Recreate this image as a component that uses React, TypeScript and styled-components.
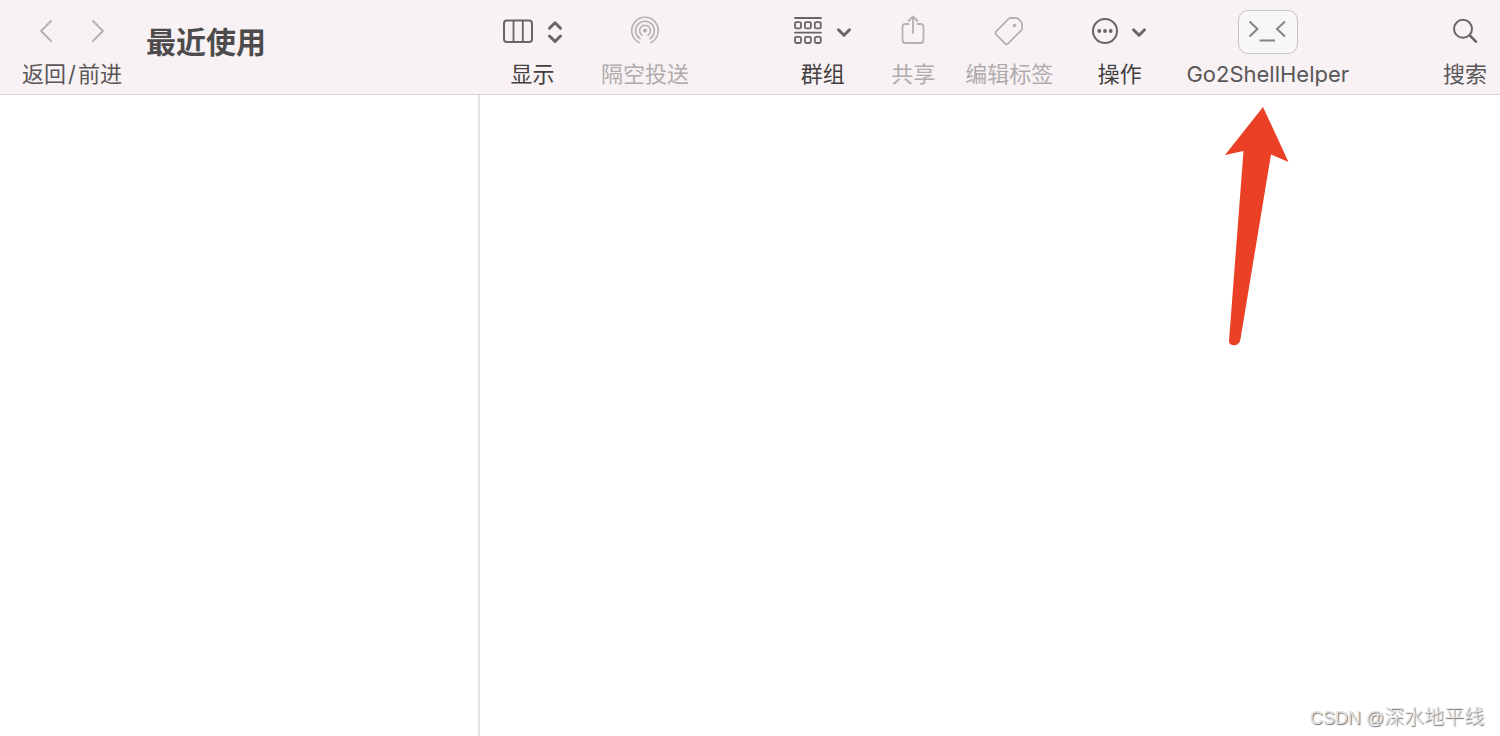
import React from "react";
import styled, { createGlobalStyle } from "styled-components";

const GlobalStyle = createGlobalStyle`
  *, *::before, *::after { box-sizing: border-box; }
  body {
    margin: 0;
    background: #ffffff;
    font-family: Inter, "Noto Sans CJK SC", sans-serif;
  }
`;

const Window = styled.div`
  display: flex;
  flex-direction: column;
  min-height: 100vh;
`;

const Toolbar = styled.header`
  display: flex;
  align-items: flex-start;
  padding: 10px 13px 8px 0;
  background: #f8f2f4;
  border-bottom: 1px solid #d9d5d7;
`;

const Lead = styled.div`
  display: flex;
  flex: 0 0 480px;
  gap: 24px;
  padding-left: 22px;
`;

const Nav = styled.nav`
  display: flex;
  flex-direction: column;
  align-items: center;
  gap: 8px;
`;

const NavButtons = styled.div`
  display: flex;
  align-items: center;
  gap: 28px;
  height: 44px;
`;

const NavButton = styled.button`
  display: flex;
  width: 24px;
  height: 44px;
  padding: 9px 0 0;
  justify-content: center;
  border: 0;
  background: none;
  color: #b7b1b3;
`;

const Title = styled.h1`
  margin: 12px 0 0;
  font-size: 30px;
  line-height: 40px;
  font-weight: 600;
  color: #4d4b4c;
`;

const Tools = styled.div`
  display: flex;
  flex: 1;
  padding-left: 22px;
`;

const Group = styled.div<{ $gap: number }>`
  display: flex;
  gap: ${(p) => p.$gap}px;
`;

const Spacer = styled.div<{ $grow: number }>`
  flex: ${(p) => p.$grow};
`;

const ToolButton = styled.button`
  display: flex;
  flex-direction: column;
  align-items: center;
  gap: 8px;
  padding: 0;
  border: 0;
  background: none;
  font-family: inherit;
  color: #6b6467;

  &:disabled {
    color: #b7b1b3;
  }
`;

const IconRow = styled.span`
  display: flex;
  gap: 13px;
  height: 44px;
  align-items: center;
`;

const Label = styled.span<{ $strong?: boolean }>`
  font-size: 22px;
  line-height: 24px;
  white-space: nowrap;
  color: ${(p) => (p.$strong ? "#434042" : "#5a5759")};

  ${ToolButton}:disabled & {
    color: #b0abad;
  }
`;

const Slash = styled.span`
  padding: 0 2px;
`;

const Face = styled.span`
  display: flex;
  width: 60px;
  height: 44px;
  border: 1px solid #c4c2c3;
  border-radius: 10px;
  background: #f7f7f7;
  color: #858384;
`;

const HelperItem = styled.div`
  position: relative;
`;

const Pointer = styled.svg`
  position: absolute;
  top: 97px;
  left: 50%;
  margin-left: -43px;
  pointer-events: none;
`;

const Body = styled.div`
  display: flex;
  flex: 1;
`;

const Sidebar = styled.aside`
  flex: 0 0 480px;
  border-right: 2px solid #e2e2e2;
`;

const Content = styled.main`
  display: flex;
  flex: 1;
  align-items: flex-end;
  justify-content: flex-end;
  padding: 0 16px 5px;
`;

const Watermark = styled.p`
  margin: 0;
  font-family: "Noto Sans CJK SC", sans-serif;
  font-size: 20px;
  line-height: 26px;
  font-weight: 300;
  color: #e4e4e4;
  text-shadow: 1px 1px 1px #707070;
`;

const Site = styled.span`
  font-family: "Liberation Sans", sans-serif;
  font-size: 18px;
`;

type IconProps = {
  w: number;
  h: number;
  sw?: number;
  children: React.ReactNode;
};

const Icon = ({ w, h, sw = 2, children }: IconProps) => (
  <svg
    width={w}
    height={h}
    viewBox={`0 0 ${w} ${h}`}
    fill="none"
    stroke="currentColor"
    strokeWidth={sw}
    strokeLinecap="round"
    strokeLinejoin="round"
    aria-hidden="true"
  >
    {children}
  </svg>
);

const ChevronDown = () => (
  <Icon w={16} h={44} sw={3}>
    <path d="M2.500 19.800l5.500 5.500 5.500-5.500" />
  </Icon>
);

const ColumnsIcon = () => (
  <Icon w={32} h={44}>
    <rect x="2" y="10.500" width="28" height="21.500" rx="3" />
    <path d="M11.500 11v21M20.800 11v21" strokeWidth="1.800" />
  </Icon>
);

const UpDownIcon = () => (
  <Icon w={16} h={44} sw={3}>
    <path d="M2.500 18.300L8 12.800l5.500 5.500M2.500 26L8 31.500l5.500-5.500" />
  </Icon>
);

const AirDropIcon = () => (
  <Icon w={30} h={44} sw={1.6}>
    <circle cx="15" cy="20.500" r="2" fill="currentColor" stroke="none" />
    <path d="M11.900 25.100a5.400 5.400 0 1 1 6.200 0" />
    <path d="M10.100 28.700a9.400 9.400 0 1 1 9.800 0" />
    <path d="M9.300 32.600a13.300 13.300 0 1 1 11.400 0" />
  </Icon>
);

const GroupIcon = () => (
  <Icon w={30} h={44} sw={1.8}>
    <path d="M2 8h26M2 22.700h26" />
    {[12.2, 26.8].map((y) =>
      [2, 11.9, 21.8].map((x) => (
        <rect key={`${x}-${y}`} x={x} y={y} width="6" height="6.200" rx="1.500" />
      ))
    )}
  </Icon>
);

const ShareIcon = () => (
  <Icon w={26} h={44} sw={1.8}>
    <path d="M8.500 14H5.500a3 3 0 0 0-3 3v13a3 3 0 0 0 3 3h15a3 3 0 0 0 3-3V17a3 3 0 0 0-3-3h-3" />
    <path d="M13 23V6.500M8.500 11L13 6.500l4.500 4.500" />
  </Icon>
);

const TagIcon = () => (
  <Icon w={30} h={44} sw={1.8}>
    <path d="M14.500 8.800Q15.400 8 16.600 8H22Q23.500 8 24.500 9L27 11.500Q28 12.500 28 14V18.200Q28 19.600 27 20.600L14 33.600Q12.600 35 11.200 33.600L2 24.400Q.7 23 2 21.600Z" />
    <circle cx="20.500" cy="15.500" r="1.800" fill="currentColor" stroke="none" />
  </Icon>
);

const MoreIcon = () => (
  <Icon w={26} h={44}>
    <circle cx="13" cy="21" r="12" />
    <g fill="currentColor" stroke="none">
      <circle cx="7.300" cy="21" r="1.900" />
      <circle cx="13" cy="21" r="1.900" />
      <circle cx="18.700" cy="21" r="1.900" />
    </g>
  </Icon>
);

const SearchIcon = () => (
  <Icon w={26} h={44}>
    <circle cx="11" cy="18.800" r="9" />
    <path d="M17.700 25.400l6.300 6.300" strokeWidth="2.600" />
  </Icon>
);

export default function App() {
  return (
    <>
      <GlobalStyle />
      <Window>
        <Toolbar>
          <Lead>
            <Nav aria-label="返回/前进">
              <NavButtons>
                <NavButton type="button" aria-label="返回">
                  <Icon w={14} h={24}>
                    <path d="M12 2L2 12l10 10" />
                  </Icon>
                </NavButton>
                <NavButton type="button" aria-label="前进">
                  <Icon w={14} h={24}>
                    <path d="M2 2l10 10L2 22" />
                  </Icon>
                </NavButton>
              </NavButtons>
              <Label>
                返回<Slash>/</Slash>前进
              </Label>
            </Nav>
            <Title>最近使用</Title>
          </Lead>
          <Tools>
            <Group $gap={38}>
              <ToolButton type="button">
                <IconRow>
                  <ColumnsIcon />
                  <UpDownIcon />
                </IconRow>
                <Label $strong>显示</Label>
              </ToolButton>
              <ToolButton type="button" disabled>
                <IconRow>
                  <AirDropIcon />
                </IconRow>
                <Label>隔空投送</Label>
              </ToolButton>
            </Group>
            <Spacer $grow={10} />
            <Group $gap={39}>
              <ToolButton type="button">
                <IconRow>
                  <GroupIcon />
                  <ChevronDown />
                </IconRow>
                <Label $strong>群组</Label>
              </ToolButton>
              <Group $gap={30}>
                <ToolButton type="button" disabled>
                  <IconRow>
                    <ShareIcon />
                  </IconRow>
                  <Label>共享</Label>
                </ToolButton>
                <ToolButton type="button" disabled>
                  <IconRow>
                    <TagIcon />
                  </IconRow>
                  <Label>编辑标签</Label>
                </ToolButton>
              </Group>
              <ToolButton type="button">
                <IconRow>
                  <MoreIcon />
                  <ChevronDown />
                </IconRow>
                <Label $strong>操作</Label>
              </ToolButton>
              <HelperItem>
                <ToolButton type="button">
                  <Face>
                    <Icon w={58} h={42}>
                      <path
                        d="M10.500 10.500l8 7.500-8 7.500M46 10.500l-8 7.500 8 7.500M20.500 29.500h15.500"
                        strokeLinecap="butt"
                        strokeLinejoin="miter"
                      />
                    </Icon>
                  </Face>
                  <Label>Go2ShellHelper</Label>
                </ToolButton>
                <Pointer width="64" height="240" viewBox="0 0 64 240" aria-hidden="true">
                  <path
                    d="M38 0L63.500 55 46 47.500 15.500 232Q14.500 238 9.500 238.300Q4 238.300 4 234L18.500 44 0 48Z"
                    fill="#ea4025"
                  />
                </Pointer>
              </HelperItem>
            </Group>
            <Spacer $grow={9} />
            <ToolButton type="button">
              <IconRow>
                <SearchIcon />
              </IconRow>
              <Label>搜索</Label>
            </ToolButton>
          </Tools>
        </Toolbar>
        <Body>
          <Sidebar />
          <Content>
            <Watermark>
              <Site>CSDN @</Site>深水地平线
            </Watermark>
          </Content>
        </Body>
      </Window>
    </>
  );
}
